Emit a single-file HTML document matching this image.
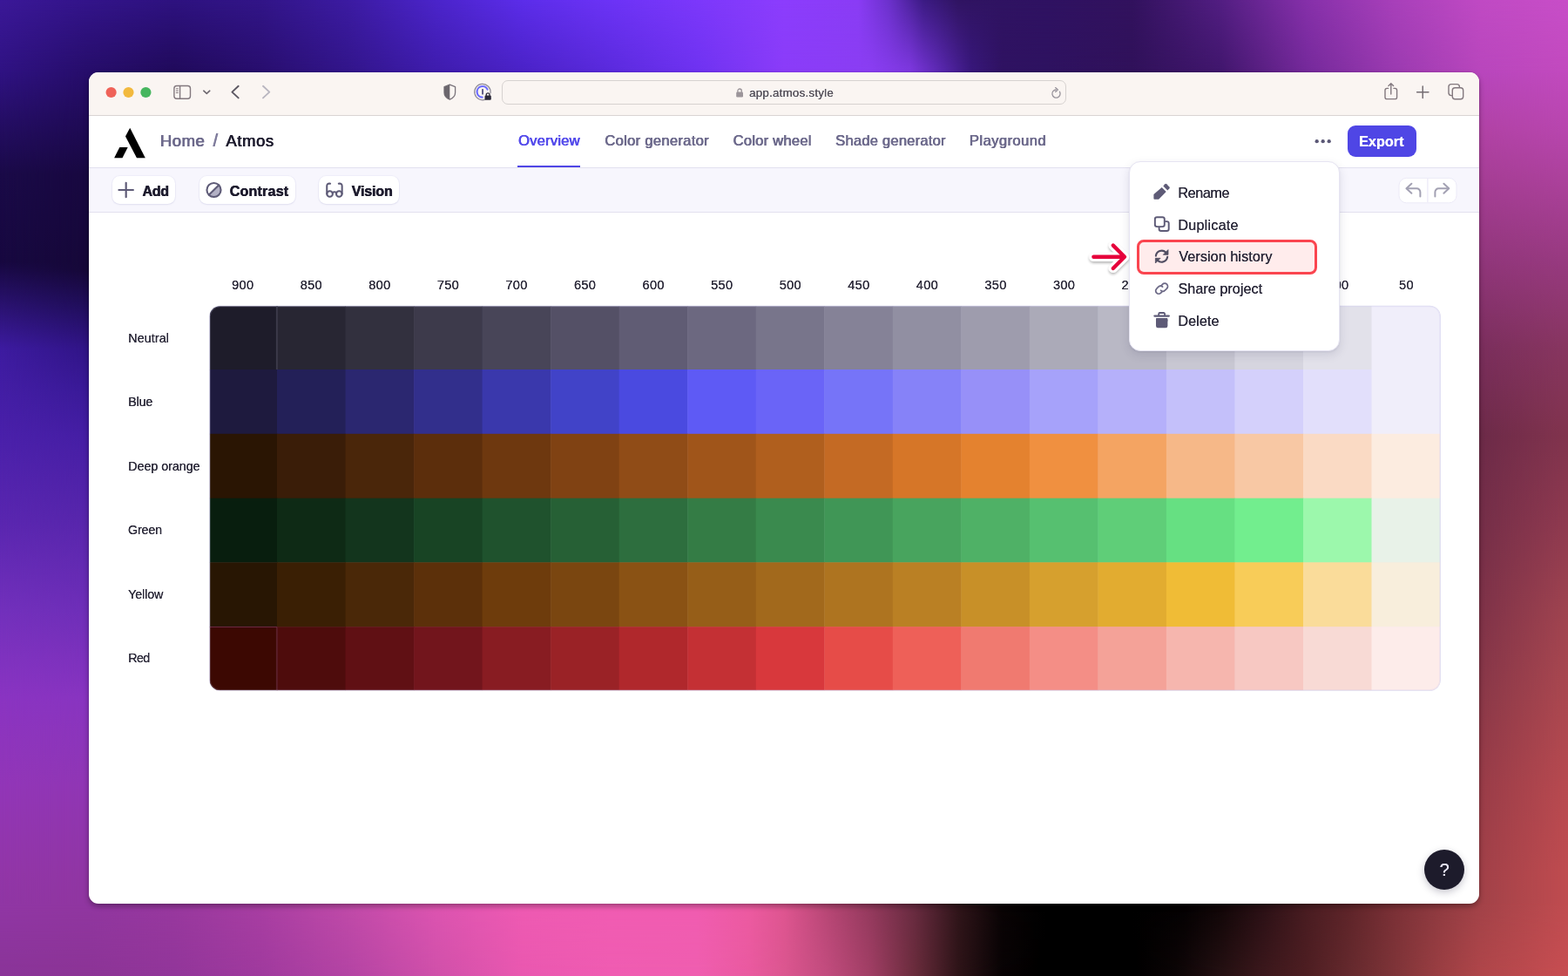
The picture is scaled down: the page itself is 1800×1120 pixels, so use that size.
<!DOCTYPE html>
<html lang="en">
<head>
<meta charset="utf-8">
<title>Atmos - Overview</title>
<style>
*{box-sizing:border-box;margin:0;padding:0}
html,body{width:1800px;height:1120px;overflow:hidden;background:#2a1040}
body{position:relative;font-family:"Liberation Sans", Arial, sans-serif}
.wall{position:absolute;left:0;top:0;display:block}
.win{position:absolute;left:102px;top:83px;width:1596px;height:954px;will-change:transform}
.clip{position:absolute;left:0;top:0;width:1596px;height:954px;border-radius:11px;overflow:hidden;background:#fff}
.winshadow{position:absolute;left:102px;top:83px;width:1596px;height:954px;border-radius:11px;box-shadow:0 3px 6px rgba(0,0,0,.33),0 0 1px rgba(0,0,0,.35)}
.pg{position:absolute;left:-102.3px;top:-83px;width:1800px;height:1120px}
.t,.pg>svg,.pg>div{position:absolute}
.pg>svg{display:block;overflow:visible}
.t{white-space:nowrap;line-height:0;height:0;display:block}
.t.c{transform:translateX(-50%)}
.titlebar{left:0;top:83px;width:1800px;height:50px;background:#faf5f2;border-bottom:1px solid #d9d4d3}
.url{left:576.5px;top:92px;width:648px;height:28px;border:1px solid #d6d2d0;border-radius:7px;background:#faf5f2}
.header{left:0;top:133px;width:1800px;height:60px;background:#fff;border-bottom:1px solid #e2e0ef}
.toolbar{left:0;top:193px;width:1800px;height:51px;background:#f7f6fd;border-bottom:1px solid #e2e0ef}
.btn{background:#fff;border-radius:8.5px;box-shadow:0 0 0 1px rgba(120,110,200,.05),0 1px 2px rgba(60,50,120,.09);height:32.2px;top:202px}
.export{left:1546.9px;top:144.2px;width:79px;height:35.8px;border-radius:9px;background:#4f46e5}
.tabline{left:594.7px;top:190px;width:72px;height:2px;background:#4f46e5}
.menu{left:1296.3px;top:184.8px;width:242.2px;height:218px;border-radius:13px;background:#fff;border:1px solid #e6e4f2;box-shadow:0 4px 11px rgba(40,36,80,.13),0 1px 2px rgba(40,36,80,.07)}
.hl{left:1305.3px;top:275px;width:206.5px;height:39.8px;border-radius:8px;border:3px solid #fa454f;background:#ffecec}
.help{left:1635.5px;top:975px;width:46px;height:46px;border-radius:50%;background:#1d1b2b;box-shadow:0 3px 8px rgba(30,28,60,.25)}
</style>
</head>
<body>
<svg class="wall" width="1800" height="1120" viewBox="0 0 1800 1120">
<defs>
<linearGradient id="gto" gradientUnits="userSpaceOnUse" x1="0" x2="1800" y1="0" y2="0"><stop offset="0.0000" stop-color="#3b1898"/><stop offset="0.0556" stop-color="#33148a"/><stop offset="0.1111" stop-color="#2e1280"/><stop offset="0.1667" stop-color="#321588"/><stop offset="0.2222" stop-color="#3c1ba2"/><stop offset="0.2778" stop-color="#4b24ca"/><stop offset="0.3333" stop-color="#5c2dea"/><stop offset="0.3889" stop-color="#6c33f6"/><stop offset="0.4444" stop-color="#7c38fb"/><stop offset="0.5000" stop-color="#8c3dfd"/><stop offset="0.5472" stop-color="#8a3cf5"/><stop offset="0.5667" stop-color="#6c31cc"/><stop offset="0.5889" stop-color="#3c1b84"/><stop offset="0.6111" stop-color="#301462"/><stop offset="0.6667" stop-color="#2f1262"/><stop offset="0.7222" stop-color="#32125e"/><stop offset="0.7778" stop-color="#521e82"/><stop offset="0.8333" stop-color="#8630aa"/><stop offset="0.8889" stop-color="#a840ba"/><stop offset="0.9444" stop-color="#c04ac4"/><stop offset="1.0000" stop-color="#c84ec8"/></linearGradient>
<linearGradient id="gti" gradientUnits="userSpaceOnUse" x1="0" x2="1800" y1="0" y2="0"><stop offset="0.0000" stop-color="#2f1282"/><stop offset="0.0556" stop-color="#260d6a"/><stop offset="0.1111" stop-color="#200a5a"/><stop offset="0.1667" stop-color="#280e6e"/><stop offset="0.2222" stop-color="#32158a"/><stop offset="0.2778" stop-color="#3e1cac"/><stop offset="0.3333" stop-color="#4a22c6"/><stop offset="0.3889" stop-color="#5a2adc"/><stop offset="0.4444" stop-color="#6e32f0"/><stop offset="0.5000" stop-color="#8a3cf8"/><stop offset="0.5556" stop-color="#8a3ef2"/><stop offset="0.5806" stop-color="#7e38e0"/><stop offset="0.6000" stop-color="#5a28b0"/><stop offset="0.6194" stop-color="#38177c"/><stop offset="0.6389" stop-color="#2f1262"/><stop offset="0.6667" stop-color="#2e1260"/><stop offset="0.7222" stop-color="#30115a"/><stop offset="0.7778" stop-color="#40166c"/><stop offset="0.8333" stop-color="#74299a"/><stop offset="0.8889" stop-color="#9a3ab0"/><stop offset="0.9444" stop-color="#b846bc"/><stop offset="1.0000" stop-color="#c24abe"/></linearGradient>
<linearGradient id="gbo" gradientUnits="userSpaceOnUse" x1="0" x2="1800" y1="0" y2="0"><stop offset="0.0000" stop-color="#8a3498"/><stop offset="0.0556" stop-color="#8c3496"/><stop offset="0.1111" stop-color="#92369a"/><stop offset="0.1667" stop-color="#a03a9e"/><stop offset="0.2222" stop-color="#b444a4"/><stop offset="0.2778" stop-color="#d050aa"/><stop offset="0.3333" stop-color="#ea58b0"/><stop offset="0.3889" stop-color="#f05cb2"/><stop offset="0.4444" stop-color="#f05eb0"/><stop offset="0.4778" stop-color="#ea5aa0"/><stop offset="0.5000" stop-color="#dc5690"/><stop offset="0.5278" stop-color="#c24c7e"/><stop offset="0.5556" stop-color="#a03e64"/><stop offset="0.5833" stop-color="#6a2c3c"/><stop offset="0.6111" stop-color="#2e1418"/><stop offset="0.6389" stop-color="#080304"/><stop offset="0.6667" stop-color="#000000"/><stop offset="0.7222" stop-color="#000000"/><stop offset="0.7500" stop-color="#0c0506"/><stop offset="0.7778" stop-color="#241012"/><stop offset="0.8056" stop-color="#3c181c"/><stop offset="0.8333" stop-color="#4e1e22"/><stop offset="0.8611" stop-color="#662a2e"/><stop offset="0.8889" stop-color="#7e3438"/><stop offset="0.9167" stop-color="#9a3e42"/><stop offset="0.9444" stop-color="#b0464a"/><stop offset="1.0000" stop-color="#c84e52"/></linearGradient>
<linearGradient id="gbi" gradientUnits="userSpaceOnUse" x1="0" x2="1800" y1="0" y2="0"><stop offset="0.0000" stop-color="#9036a4"/><stop offset="0.0556" stop-color="#9036a0"/><stop offset="0.1111" stop-color="#98389e"/><stop offset="0.1667" stop-color="#a83ea2"/><stop offset="0.2222" stop-color="#c04aa8"/><stop offset="0.2778" stop-color="#dc54b0"/><stop offset="0.3333" stop-color="#ee5ab2"/><stop offset="0.3889" stop-color="#f05cb2"/><stop offset="0.4444" stop-color="#f05cb0"/><stop offset="0.4778" stop-color="#ec5aa0"/><stop offset="0.5000" stop-color="#de5590"/><stop offset="0.5278" stop-color="#b64674"/><stop offset="0.5556" stop-color="#92395c"/><stop offset="0.5833" stop-color="#682b40"/><stop offset="0.6111" stop-color="#30151a"/><stop offset="0.6389" stop-color="#0a0405"/><stop offset="0.6667" stop-color="#000000"/><stop offset="0.7222" stop-color="#000000"/><stop offset="0.7556" stop-color="#040102"/><stop offset="0.7778" stop-color="#100607"/><stop offset="0.8056" stop-color="#2a1015"/><stop offset="0.8333" stop-color="#481c21"/><stop offset="0.8611" stop-color="#5e2429"/><stop offset="0.8889" stop-color="#7a3036"/><stop offset="0.9167" stop-color="#8e3a40"/><stop offset="0.9444" stop-color="#a24248"/><stop offset="1.0000" stop-color="#c04c50"/></linearGradient>
<linearGradient id="glo" gradientUnits="userSpaceOnUse" x1="0" x2="0" y1="83" y2="1037"><stop offset="0.0000" stop-color="#2f1282"/><stop offset="0.0702" stop-color="#230d60"/><stop offset="0.1226" stop-color="#1a0a48"/><stop offset="0.2275" stop-color="#170840"/><stop offset="0.2799" stop-color="#2a1270"/><stop offset="0.3323" stop-color="#3d1ba0"/><stop offset="0.4371" stop-color="#4a20aa"/><stop offset="0.5419" stop-color="#5a26b0"/><stop offset="0.6468" stop-color="#7230bc"/><stop offset="0.7516" stop-color="#8a34c2"/><stop offset="0.8564" stop-color="#9236b8"/><stop offset="0.9612" stop-color="#9236a8"/><stop offset="1.0000" stop-color="#9036a4"/></linearGradient>
<linearGradient id="gli" gradientUnits="userSpaceOnUse" x1="0" x2="0" y1="83" y2="1037"><stop offset="0.0000" stop-color="#260d6a"/><stop offset="0.0702" stop-color="#1e0a52"/><stop offset="0.1226" stop-color="#180840"/><stop offset="0.2379" stop-color="#160838"/><stop offset="0.2799" stop-color="#200e5a"/><stop offset="0.3323" stop-color="#301486"/><stop offset="0.3847" stop-color="#3a1a98"/><stop offset="0.4371" stop-color="#451ea4"/><stop offset="0.5419" stop-color="#5826ac"/><stop offset="0.6468" stop-color="#6e2eb8"/><stop offset="0.7516" stop-color="#8834c0"/><stop offset="0.8564" stop-color="#9036b4"/><stop offset="0.9612" stop-color="#9036a4"/><stop offset="1.0000" stop-color="#9036a0"/></linearGradient>
<linearGradient id="gro" gradientUnits="userSpaceOnUse" x1="0" x2="0" y1="83" y2="1037"><stop offset="0.0000" stop-color="#c24abe"/><stop offset="0.0702" stop-color="#b846ae"/><stop offset="0.1226" stop-color="#ae429e"/><stop offset="0.2275" stop-color="#983a80"/><stop offset="0.3323" stop-color="#883660"/><stop offset="0.4371" stop-color="#82344e"/><stop offset="0.5419" stop-color="#903a50"/><stop offset="0.6468" stop-color="#a04450"/><stop offset="0.7516" stop-color="#ac4850"/><stop offset="0.8564" stop-color="#b84a50"/><stop offset="0.9612" stop-color="#c04c50"/><stop offset="1.0000" stop-color="#c04c50"/></linearGradient>
<linearGradient id="gri" gradientUnits="userSpaceOnUse" x1="0" x2="0" y1="83" y2="1037"><stop offset="0.0000" stop-color="#b746bc"/><stop offset="0.0702" stop-color="#b042a4"/><stop offset="0.1226" stop-color="#a63e96"/><stop offset="0.2275" stop-color="#90367a"/><stop offset="0.3323" stop-color="#7a2e5c"/><stop offset="0.4371" stop-color="#6c2a48"/><stop offset="0.5419" stop-color="#742e48"/><stop offset="0.6468" stop-color="#7e3248"/><stop offset="0.7516" stop-color="#8a3848"/><stop offset="0.8564" stop-color="#983c48"/><stop offset="0.9612" stop-color="#a04048"/><stop offset="1.0000" stop-color="#a14248"/></linearGradient>
<linearGradient id="fd" gradientUnits="userSpaceOnUse" x1="0" x2="0" y1="0" y2="83"><stop offset="0" stop-color="#fff" stop-opacity="0"/><stop offset="1" stop-color="#fff" stop-opacity="1"/></linearGradient>
<linearGradient id="fu" gradientUnits="userSpaceOnUse" x1="0" x2="0" y1="1120" y2="1037"><stop offset="0" stop-color="#fff" stop-opacity="0"/><stop offset="1" stop-color="#fff" stop-opacity="1"/></linearGradient>
<linearGradient id="fr" gradientUnits="userSpaceOnUse" x1="0" x2="102" y1="0" y2="0"><stop offset="0" stop-color="#fff" stop-opacity="0"/><stop offset="1" stop-color="#fff" stop-opacity="1"/></linearGradient>
<linearGradient id="fl" gradientUnits="userSpaceOnUse" x1="1800" x2="1698" y1="0" y2="0"><stop offset="0" stop-color="#fff" stop-opacity="0"/><stop offset="1" stop-color="#fff" stop-opacity="1"/></linearGradient>
<mask id="mt" maskUnits="userSpaceOnUse" x="0" y="0" width="1800" height="97"><rect x="0" y="0" width="1800" height="97" fill="url(#fd)"/></mask>
<mask id="mb" maskUnits="userSpaceOnUse" x="0" y="1023" width="1800" height="97"><rect x="0" y="1023" width="1800" height="97" fill="url(#fu)"/></mask>
<mask id="ml" maskUnits="userSpaceOnUse" x="0" y="83" width="116" height="954"><rect x="0" y="83" width="116" height="954" fill="url(#fr)"/></mask>
<mask id="mr" maskUnits="userSpaceOnUse" x="1684" y="83" width="116" height="954"><rect x="1684" y="83" width="116" height="954" fill="url(#fl)"/></mask>
</defs>
<rect width="1800" height="1120" fill="#2a1040"/>
<rect x="0" y="0" width="1800" height="97" fill="url(#gto)"/>
<rect x="0" y="0" width="1800" height="97" fill="url(#gti)" mask="url(#mt)"/>
<rect x="0" y="1023" width="1800" height="97" fill="url(#gbo)"/>
<rect x="0" y="1023" width="1800" height="97" fill="url(#gbi)" mask="url(#mb)"/>
<rect x="0" y="83" width="116" height="954" fill="url(#glo)"/>
<rect x="0" y="83" width="116" height="954" fill="url(#gli)" mask="url(#ml)"/>
<rect x="1684" y="83" width="116" height="954" fill="url(#gro)"/>
<rect x="1684" y="83" width="116" height="954" fill="url(#gri)" mask="url(#mr)"/>
</svg>
<div class="winshadow"></div>
<div class="win"><div class="clip"><div class="pg">

<div class="titlebar"></div>
<svg style="left:110px;top:90px" width="220" height="32" viewBox="110 90 220 32" >
<circle cx="127.6" cy="106" r="6.1" fill="#ef6259"/>
<circle cx="147.5" cy="106" r="6.1" fill="#f2b93e"/>
<circle cx="167.4" cy="106" r="6.1" fill="#46b65f"/>
<g fill="none" stroke="#82787e" stroke-width="1.4" stroke-linecap="round" stroke-linejoin="round">
<rect x="199.9" y="98.5" width="18.6" height="14.8" rx="3"/>
<path d="M206.6 98.7V113.1"/>
<path d="M202.3 101.8H204.4M202.3 104.1H204.4M202.3 106.4H204.4" stroke-width="1"/>
</g>
<path d="M233.8 104.2L237.3 107.4L240.8 104.2" fill="none" stroke="#6e6870" stroke-width="1.6" stroke-linecap="round" stroke-linejoin="round"/>
<path d="M273.7 98.8L266.4 105.6L273.7 112.4" fill="none" stroke="#5c5762" stroke-width="1.9" stroke-linecap="round" stroke-linejoin="round"/>
<path d="M302 98.8L309.3 105.6L302 112.4" fill="none" stroke="#b9b6c0" stroke-width="1.9" stroke-linecap="round" stroke-linejoin="round"/>
</svg><svg style="left:500px;top:90px" width="80" height="32" viewBox="500 90 80 32" >
<path d="M516.3 97.2L522.6 99.7V106.2C522.6 110 520 112.6 516.3 114.2C512.6 112.6 510 110 510 106.2V99.7Z" fill="none" stroke="#7a747b" stroke-width="1.3" stroke-linejoin="round"/>
<path d="M516.3 97.2L510 99.7V106.2C510 110 512.6 112.6 516.3 114.2Z" fill="#6b666d"/>
<path d="M557.5 114.1A9.2 9.2 0 1 1 563.1 106.6" fill="none" stroke="#8d8994" stroke-width="1.2" stroke-linecap="round"/>
<path d="M553.6 111.6A6.3 6.3 0 1 1 559.6 102.6" fill="none" stroke="#6c6cff" stroke-width="2.1" stroke-linecap="round"/>
<rect x="553.1" y="102" width="1.9" height="6.6" rx="0.5" fill="#5d5a85"/>
<rect x="556.5" y="109.6" width="7.3" height="5.1" rx="1.2" fill="#2b2939"/>
<path d="M558.2 110V108.9A1.95 1.95 0 0 1 562.1 108.9V110" fill="none" stroke="#2b2939" stroke-width="1.3"/>
</svg><svg style="left:1580px;top:90px" width="110" height="32" viewBox="1580 90 110 32" >
<g fill="none" stroke="#82787e" stroke-width="1.4" stroke-linecap="round" stroke-linejoin="round">
<path d="M1593.6 101.4H1592.2A2.2 2.2 0 0 0 1590 103.6V111.4A2.2 2.2 0 0 0 1592.2 113.6H1601.4A2.2 2.2 0 0 0 1603.6 111.4V103.6A2.2 2.2 0 0 0 1601.4 101.4H1600"/>
<path d="M1596.8 108V96M1594 98.6L1596.8 95.8L1599.6 98.6"/>
<path d="M1626.6 105.7H1639.9M1633.25 99V112.4" stroke="#746d73" stroke-width="1.5"/>
<rect x="1663" y="96.6" width="12.4" height="13" rx="3"/>
<rect x="1667.3" y="100.8" width="12.4" height="13" rx="3" fill="#faf5f2"/>
</g>
</svg>
<div class="url"></div>
<svg style="left:840px;top:96px" width="20" height="20" viewBox="840 96 20 20" >
<rect x="845.2" y="105.6" width="7.8" height="5.8" rx="1.2" fill="#9c959a"/>
<path d="M846.9 106V104.2A2.2 2.2 0 0 1 851.3 104.2V106" fill="none" stroke="#9c959a" stroke-width="1.3"/>
</svg><svg style="left:1200px;top:96px" width="24" height="24" viewBox="1200 96 24 24" >
<path d="M1216.4 105.2A4.6 4.6 0 1 1 1212.4 103" fill="none" stroke="#97939b" stroke-width="1.3" stroke-linecap="round"/>
<path d="M1211.6 100.6L1214.4 103L1211.6 105.4" fill="none" stroke="#97939b" stroke-width="1.3" stroke-linecap="round" stroke-linejoin="round"/>
</svg>
<span class="t" style="left:860.35px;top:107.39px;font-size:13.3px;color:#55515b;letter-spacing:0.25px;text-shadow:0.15px 0 0 #55515b;">app.atmos.style</span>

<div class="header"></div>
<svg style="left:128px;top:144px" width="42" height="40" viewBox="128 144 42 40" >
<path d="M149.2 146.8L166.8 181.2H157L144 156.4Z" fill="#000"/>
<path d="M137.3 169H146.7L140.5 181.2H131.1Z" fill="#000"/>
</svg>
<span class="t" style="left:184.19px;top:161.59px;font-size:18.5px;color:#6d6a8c;letter-spacing:0.52px;text-shadow:0.4px 0 0 #6d6a8c,-0.4px 0 0 #6d6a8c;">Home</span>
<span class="t" style="left:244.97px;top:161.24px;font-size:19.5px;color:#7f7c9c;text-shadow:0.4px 0 0 #7f7c9c,-0.4px 0 0 #7f7c9c;">/</span>
<span class="t" style="left:259.76px;top:161.59px;font-size:18.5px;color:#1f1d2f;letter-spacing:0.58px;text-shadow:0.4px 0 0 #1f1d2f,-0.4px 0 0 #1f1d2f;">Atmos</span>

<span class="t" style="left:595.41px;top:162.25px;font-size:16.6px;color:#554ceb;letter-spacing:0.19px;text-shadow:0.35px 0 0 #554ceb,-0.35px 0 0 #554ceb;">Overview</span>
<span class="t" style="left:694.63px;top:162.25px;font-size:16.6px;color:#6d6a8c;letter-spacing:0.29px;text-shadow:0.35px 0 0 #6d6a8c,-0.35px 0 0 #6d6a8c;">Color generator</span>
<span class="t" style="left:841.93px;top:162.25px;font-size:16.6px;color:#6d6a8c;letter-spacing:0.22px;text-shadow:0.35px 0 0 #6d6a8c,-0.35px 0 0 #6d6a8c;">Color wheel</span>
<span class="t" style="left:959.52px;top:162.25px;font-size:16.6px;color:#6d6a8c;letter-spacing:0.19px;text-shadow:0.35px 0 0 #6d6a8c,-0.35px 0 0 #6d6a8c;">Shade generator</span>
<span class="t" style="left:1113.27px;top:162.25px;font-size:16.6px;color:#6d6a8c;letter-spacing:0.41px;text-shadow:0.35px 0 0 #6d6a8c,-0.35px 0 0 #6d6a8c;">Playground</span>
<div class="tabline"></div>
<svg style="left:1505px;top:155px" width="28" height="14" viewBox="1505 155 28 14" >
<circle cx="1511.7" cy="162.2" r="2.15" fill="#5b5876"/>
<circle cx="1518.7" cy="162.2" r="2.15" fill="#5b5876"/>
<circle cx="1525.7" cy="162.2" r="2.15" fill="#5b5876"/>
</svg>
<div class="export"></div>
<span class="t" style="left:1560.37px;top:162.39px;font-size:16.2px;font-weight:700;color:#fff;letter-spacing:0.01px;text-shadow:0.15px 0 0 #fff;">Export</span>

<div class="toolbar"></div>
<div class="btn" style="left:129.4px;width:72.2px"></div>
<div class="btn" style="left:229.2px;width:109.8px"></div>
<div class="btn" style="left:366.2px;width:92.3px"></div>
<span class="t" style="left:163.83px;top:219.42px;font-size:16.1px;font-weight:700;color:#1f1d2f;letter-spacing:-0.32px;text-shadow:0.25px 0 0 #1f1d2f,-0.25px 0 0 #1f1d2f;">Add</span>
<span class="t" style="left:263.95px;top:219.42px;font-size:16.1px;font-weight:700;color:#1f1d2f;letter-spacing:0.19px;text-shadow:0.25px 0 0 #1f1d2f,-0.25px 0 0 #1f1d2f;">Contrast</span>
<span class="t" style="left:403.99px;top:219.42px;font-size:16.1px;font-weight:700;color:#1f1d2f;letter-spacing:-0.17px;text-shadow:0.25px 0 0 #1f1d2f,-0.25px 0 0 #1f1d2f;">Vision</span>
<svg style="left:130px;top:200px" width="330" height="36" viewBox="130 200 330 36" >
<path d="M136.45 218H152.9M144.67 209.8V226.2" fill="none" stroke="#5e5b77" stroke-width="2.2" stroke-linecap="round"/>
<circle cx="245.5" cy="218" r="8.05" fill="#fff"/>
<path d="M251.2 212.3A8.05 8.05 0 0 1 239.8 223.7Z" fill="#b3b1c5"/>
<path d="M239.9 223.6L251.1 212.4" fill="none" stroke="#5e5b77" stroke-width="2.1" stroke-linecap="round"/>
<circle cx="245.5" cy="218" r="8.05" fill="none" stroke="#5e5b77" stroke-width="2.1"/>
<g fill="none" stroke="#5e5b77" stroke-width="2.05" stroke-linecap="round" stroke-linejoin="round">
<circle cx="378.6" cy="222.5" r="3.3"/>
<circle cx="389.3" cy="222.5" r="3.3"/>
<path d="M381.6 221.2C382.9 220.2 385 220.2 386.3 221.2"/>
<path d="M375.25 222.4V213.4A2.9 2.9 0 0 1 378.15 210.5L379.1 210.8"/>
<path d="M392.65 222.4V213.4A2.9 2.9 0 0 0 389.75 210.5L388.8 210.8"/>
</g>
</svg><svg style="left:1600px;top:200px" width="80" height="36" viewBox="1600 200 80 36" >
<rect x="1606" y="204.4" width="66" height="28.4" rx="8.5" fill="#fff" stroke="#eceaf7" stroke-width="1"/>
<path d="M1638.9 204.9V232.3" stroke="#eceaf7" stroke-width="1.3"/>
<g fill="none" stroke="#a3a1b3" stroke-width="2" stroke-linecap="round" stroke-linejoin="round">
<path d="M1620.4 210.8L1614.5 216.3L1620.4 221.8"/>
<path d="M1614.8 216.3H1626.3A4.1 4.1 0 0 1 1630.4 220.4V225.6"/>
<path d="M1657.4 210.8L1663.3 216.3L1657.4 221.8"/>
<path d="M1663 216.3H1651.5A4.1 4.1 0 0 0 1647.4 220.4V225.6"/>
</g>
</svg>

<span class="t c" style="left:279.0px;top:327.44px;font-size:14.6px;color:#2a2838;letter-spacing:0.3px;text-shadow:0.1px 0 0 #2a2838;">900</span>
<span class="t c" style="left:357.57px;top:327.44px;font-size:14.6px;color:#2a2838;letter-spacing:0.3px;text-shadow:0.1px 0 0 #2a2838;">850</span>
<span class="t c" style="left:436.14px;top:327.44px;font-size:14.6px;color:#2a2838;letter-spacing:0.3px;text-shadow:0.1px 0 0 #2a2838;">800</span>
<span class="t c" style="left:514.71px;top:327.44px;font-size:14.6px;color:#2a2838;letter-spacing:0.3px;text-shadow:0.1px 0 0 #2a2838;">750</span>
<span class="t c" style="left:593.28px;top:327.44px;font-size:14.6px;color:#2a2838;letter-spacing:0.3px;text-shadow:0.1px 0 0 #2a2838;">700</span>
<span class="t c" style="left:671.85px;top:327.44px;font-size:14.6px;color:#2a2838;letter-spacing:0.3px;text-shadow:0.1px 0 0 #2a2838;">650</span>
<span class="t c" style="left:750.42px;top:327.44px;font-size:14.6px;color:#2a2838;letter-spacing:0.3px;text-shadow:0.1px 0 0 #2a2838;">600</span>
<span class="t c" style="left:828.99px;top:327.44px;font-size:14.6px;color:#2a2838;letter-spacing:0.3px;text-shadow:0.1px 0 0 #2a2838;">550</span>
<span class="t c" style="left:907.56px;top:327.44px;font-size:14.6px;color:#2a2838;letter-spacing:0.3px;text-shadow:0.1px 0 0 #2a2838;">500</span>
<span class="t c" style="left:986.13px;top:327.44px;font-size:14.6px;color:#2a2838;letter-spacing:0.3px;text-shadow:0.1px 0 0 #2a2838;">450</span>
<span class="t c" style="left:1064.7px;top:327.44px;font-size:14.6px;color:#2a2838;letter-spacing:0.3px;text-shadow:0.1px 0 0 #2a2838;">400</span>
<span class="t c" style="left:1143.27px;top:327.44px;font-size:14.6px;color:#2a2838;letter-spacing:0.3px;text-shadow:0.1px 0 0 #2a2838;">350</span>
<span class="t c" style="left:1221.84px;top:327.44px;font-size:14.6px;color:#2a2838;letter-spacing:0.3px;text-shadow:0.1px 0 0 #2a2838;">300</span>
<span class="t c" style="left:1300.41px;top:327.44px;font-size:14.6px;color:#2a2838;letter-spacing:0.3px;text-shadow:0.1px 0 0 #2a2838;">250</span>
<span class="t c" style="left:1378.98px;top:327.44px;font-size:14.6px;color:#2a2838;letter-spacing:0.3px;text-shadow:0.1px 0 0 #2a2838;">200</span>
<span class="t c" style="left:1457.55px;top:327.44px;font-size:14.6px;color:#2a2838;letter-spacing:0.3px;text-shadow:0.1px 0 0 #2a2838;">150</span>
<span class="t c" style="left:1536.12px;top:327.44px;font-size:14.6px;color:#2a2838;letter-spacing:0.3px;text-shadow:0.1px 0 0 #2a2838;">100</span>
<span class="t c" style="left:1614.69px;top:327.44px;font-size:14.6px;color:#2a2838;letter-spacing:0.3px;text-shadow:0.1px 0 0 #2a2838;">50</span>
<span class="t" style="left:147.56px;top:388.05px;font-size:14.3px;color:#2a2838;letter-spacing:0.09px;text-shadow:0.1px 0 0 #2a2838;">Neutral</span>
<span class="t" style="left:147.56px;top:461.05px;font-size:14.3px;color:#2a2838;letter-spacing:-0.19px;text-shadow:0.1px 0 0 #2a2838;">Blue</span>
<span class="t" style="left:147.56px;top:535.05px;font-size:14.3px;color:#2a2838;letter-spacing:-0.04px;text-shadow:0.1px 0 0 #2a2838;">Deep orange</span>
<span class="t" style="left:147.21px;top:608.05px;font-size:14.3px;color:#2a2838;letter-spacing:-0.15px;text-shadow:0.1px 0 0 #2a2838;">Green</span>
<span class="t" style="left:147.38px;top:682.05px;font-size:14.3px;color:#2a2838;letter-spacing:-0.12px;text-shadow:0.1px 0 0 #2a2838;">Yellow</span>
<span class="t" style="left:147.56px;top:755.05px;font-size:14.3px;color:#2a2838;letter-spacing:-0.64px;text-shadow:0.1px 0 0 #2a2838;">Red</span>
<svg class="grid" style="left:236px;top:346px" width="1424" height="452" viewBox="236 346 1424 452">
<defs><clipPath id="gc"><rect x="240.7" y="351.2" width="1412.60" height="441.10" rx="12" ry="12"/></clipPath></defs>
<rect x="241.00" y="351.50" width="1412.00" height="440.50" rx="11.7" ry="11.7" fill="none" stroke="#dcdaf0" stroke-width="1.6"/>
<g clip-path="url(#gc)">
<rect x="240.7" y="351.2" width="1412.60" height="441.10" fill="#dcdaf0"/>
<g transform="translate(0 0)"><rect x="240.70" y="351.20" width="77.80" height="73.30" fill="#1e1c2a"/><rect x="318.00" y="351.20" width="79.03" height="73.30" fill="#282633"/><rect x="396.53" y="351.20" width="79.03" height="73.30" fill="#32303e"/><rect x="475.06" y="351.20" width="79.03" height="73.30" fill="#3d3a4b"/><rect x="553.59" y="351.20" width="79.03" height="73.30" fill="#484558"/><rect x="632.12" y="351.20" width="79.04" height="73.30" fill="#545066"/><rect x="710.66" y="351.20" width="79.03" height="73.30" fill="#605c74"/><rect x="789.19" y="351.20" width="79.03" height="73.30" fill="#6c6880"/><rect x="867.72" y="351.20" width="79.03" height="73.30" fill="#78758b"/><rect x="946.25" y="351.20" width="79.03" height="73.30" fill="#858297"/><rect x="1024.78" y="351.20" width="79.03" height="73.30" fill="#918fa2"/><rect x="1103.31" y="351.20" width="79.03" height="73.30" fill="#9e9cad"/><rect x="1181.84" y="351.20" width="79.04" height="73.30" fill="#abaab8"/><rect x="1260.38" y="351.20" width="79.03" height="73.30" fill="#b9b8c5"/><rect x="1338.91" y="351.20" width="79.03" height="73.30" fill="#c8c7d2"/><rect x="1417.44" y="351.20" width="79.03" height="73.30" fill="#d6d5df"/><rect x="1495.97" y="351.20" width="79.03" height="73.30" fill="#e2e1ea"/><rect x="1574.50" y="351.20" width="78.80" height="73.30" fill="#f0eefa"/><rect x="240.70" y="424.00" width="77.80" height="74.30" fill="#1e1a3e"/><rect x="318.00" y="424.00" width="79.03" height="74.30" fill="#232058"/><rect x="396.53" y="424.00" width="79.03" height="74.30" fill="#2b2770"/><rect x="475.06" y="424.00" width="79.03" height="74.30" fill="#322f8c"/><rect x="553.59" y="424.00" width="79.03" height="74.30" fill="#3a38ac"/><rect x="632.12" y="424.00" width="79.04" height="74.30" fill="#4143c8"/><rect x="710.66" y="424.00" width="79.03" height="74.30" fill="#4a4ae0"/><rect x="789.19" y="424.00" width="79.03" height="74.30" fill="#5e5af5"/><rect x="867.72" y="424.00" width="79.03" height="74.30" fill="#6a64f7"/><rect x="946.25" y="424.00" width="79.03" height="74.30" fill="#7674f8"/><rect x="1024.78" y="424.00" width="79.03" height="74.30" fill="#8682f8"/><rect x="1103.31" y="424.00" width="79.03" height="74.30" fill="#9790f8"/><rect x="1181.84" y="424.00" width="79.04" height="74.30" fill="#a6a2fa"/><rect x="1260.38" y="424.00" width="79.03" height="74.30" fill="#b5b0fa"/><rect x="1338.91" y="424.00" width="79.03" height="74.30" fill="#c4c0fa"/><rect x="1417.44" y="424.00" width="79.03" height="74.30" fill="#d4d0fb"/><rect x="1495.97" y="424.00" width="79.03" height="74.30" fill="#e2dffb"/><rect x="1574.50" y="424.00" width="78.80" height="74.30" fill="#f0eefa"/><rect x="240.70" y="497.80" width="77.80" height="74.40" fill="#2a1503"/><rect x="318.00" y="497.80" width="79.03" height="74.40" fill="#3a1d08"/><rect x="396.53" y="497.80" width="79.03" height="74.40" fill="#4a260a"/><rect x="475.06" y="497.80" width="79.03" height="74.40" fill="#5c2e0c"/><rect x="553.59" y="497.80" width="79.03" height="74.40" fill="#6e380f"/><rect x="632.12" y="497.80" width="79.04" height="74.40" fill="#804213"/><rect x="710.66" y="497.80" width="79.03" height="74.40" fill="#904c17"/><rect x="789.19" y="497.80" width="79.03" height="74.40" fill="#a0551a"/><rect x="867.72" y="497.80" width="79.03" height="74.40" fill="#b05f1e"/><rect x="946.25" y="497.80" width="79.03" height="74.40" fill="#c46a24"/><rect x="1024.78" y="497.80" width="79.03" height="74.40" fill="#d67628"/><rect x="1103.31" y="497.80" width="79.03" height="74.40" fill="#e4822f"/><rect x="1181.84" y="497.80" width="79.04" height="74.40" fill="#f09040"/><rect x="1260.38" y="497.80" width="79.03" height="74.40" fill="#f4a462"/><rect x="1338.91" y="497.80" width="79.03" height="74.40" fill="#f6b888"/><rect x="1417.44" y="497.80" width="79.03" height="74.40" fill="#f8c8a4"/><rect x="1495.97" y="497.80" width="79.03" height="74.40" fill="#fadac4"/><rect x="1574.50" y="497.80" width="78.80" height="74.40" fill="#fcece0"/><rect x="240.70" y="571.70" width="77.80" height="74.10" fill="#081e0e"/><rect x="318.00" y="571.70" width="79.03" height="74.10" fill="#0e2a15"/><rect x="396.53" y="571.70" width="79.03" height="74.10" fill="#13351d"/><rect x="475.06" y="571.70" width="79.03" height="74.10" fill="#184424"/><rect x="553.59" y="571.70" width="79.03" height="74.10" fill="#1f522d"/><rect x="632.12" y="571.70" width="79.04" height="74.10" fill="#266035"/><rect x="710.66" y="571.70" width="79.03" height="74.10" fill="#2d6e3e"/><rect x="789.19" y="571.70" width="79.03" height="74.10" fill="#347c45"/><rect x="867.72" y="571.70" width="79.03" height="74.10" fill="#3a8a4e"/><rect x="946.25" y="571.70" width="79.03" height="74.10" fill="#409656"/><rect x="1024.78" y="571.70" width="79.03" height="74.10" fill="#48a45e"/><rect x="1103.31" y="571.70" width="79.03" height="74.10" fill="#4fb166"/><rect x="1181.84" y="571.70" width="79.04" height="74.10" fill="#56c070"/><rect x="1260.38" y="571.70" width="79.03" height="74.10" fill="#5fce78"/><rect x="1338.91" y="571.70" width="79.03" height="74.10" fill="#66e082"/><rect x="1417.44" y="571.70" width="79.03" height="74.10" fill="#72ee8e"/><rect x="1495.97" y="571.70" width="79.03" height="74.10" fill="#9cf8ac"/><rect x="1574.50" y="571.70" width="78.80" height="74.10" fill="#e8f2e8"/><rect x="240.70" y="645.30" width="77.80" height="74.40" fill="#281603"/><rect x="318.00" y="645.30" width="79.03" height="74.40" fill="#3a1f04"/><rect x="396.53" y="645.30" width="79.03" height="74.40" fill="#4a2808"/><rect x="475.06" y="645.30" width="79.03" height="74.40" fill="#5c300a"/><rect x="553.59" y="645.30" width="79.03" height="74.40" fill="#6e3c0c"/><rect x="632.12" y="645.30" width="79.04" height="74.40" fill="#7a4610"/><rect x="710.66" y="645.30" width="79.03" height="74.40" fill="#8a5214"/><rect x="789.19" y="645.30" width="79.03" height="74.40" fill="#965e18"/><rect x="867.72" y="645.30" width="79.03" height="74.40" fill="#a2691c"/><rect x="946.25" y="645.30" width="79.03" height="74.40" fill="#ae7420"/><rect x="1024.78" y="645.30" width="79.03" height="74.40" fill="#ba8024"/><rect x="1103.31" y="645.30" width="79.03" height="74.40" fill="#c89028"/><rect x="1181.84" y="645.30" width="79.04" height="74.40" fill="#d6a02e"/><rect x="1260.38" y="645.30" width="79.03" height="74.40" fill="#e2ac30"/><rect x="1338.91" y="645.30" width="79.03" height="74.40" fill="#f0bc36"/><rect x="1417.44" y="645.30" width="79.03" height="74.40" fill="#f8cc58"/><rect x="1495.97" y="645.30" width="79.03" height="74.40" fill="#fadc9a"/><rect x="1574.50" y="645.30" width="78.80" height="74.40" fill="#f8eedc"/><rect x="240.70" y="719.20" width="77.80" height="73.10" fill="#3c0802"/><rect x="318.00" y="719.20" width="79.03" height="73.10" fill="#4e0c0c"/><rect x="396.53" y="719.20" width="79.03" height="73.10" fill="#601014"/><rect x="475.06" y="719.20" width="79.03" height="73.10" fill="#72151c"/><rect x="553.59" y="719.20" width="79.03" height="73.10" fill="#881c22"/><rect x="632.12" y="719.20" width="79.04" height="73.10" fill="#9a2226"/><rect x="710.66" y="719.20" width="79.03" height="73.10" fill="#b0282c"/><rect x="789.19" y="719.20" width="79.03" height="73.10" fill="#c43034"/><rect x="867.72" y="719.20" width="79.03" height="73.10" fill="#d8383c"/><rect x="946.25" y="719.20" width="79.03" height="73.10" fill="#e64c48"/><rect x="1024.78" y="719.20" width="79.03" height="73.10" fill="#ee6058"/><rect x="1103.31" y="719.20" width="79.03" height="73.10" fill="#f07a70"/><rect x="1181.84" y="719.20" width="79.04" height="73.10" fill="#f48e86"/><rect x="1260.38" y="719.20" width="79.03" height="73.10" fill="#f4a298"/><rect x="1338.91" y="719.20" width="79.03" height="73.10" fill="#f6b6ae"/><rect x="1417.44" y="719.20" width="79.03" height="73.10" fill="#f7c8c2"/><rect x="1495.97" y="719.20" width="79.03" height="73.10" fill="#f8dad5"/><rect x="1574.50" y="719.20" width="78.80" height="73.10" fill="#fdecea"/></g>
<rect x="316.90" y="351.20" width="1.9" height="72.80" fill="#3c3a4a"/>
<rect x="316.90" y="719.20" width="1.9" height="73.10" fill="#5a1f2a"/>
<rect x="240.70" y="719.00" width="77.30" height="1" fill="#6b2844"/>
<rect x="241.20" y="351.70" width="1411.60" height="440.10" rx="11.5" ry="11.5" fill="none" stroke="#c9c6ee" stroke-opacity="0.28" stroke-width="1"/>
</g>
</svg>

<div class="menu"></div>
<div class="hl"></div>
<span class="t" style="left:1352.6px;top:221.39px;font-size:16.2px;color:#2a2839;letter-spacing:-0.42px;text-shadow:0.15px 0 0 #2a2839;">Rename</span>
<span class="t" style="left:1352.6px;top:258.39px;font-size:16.2px;color:#2a2839;letter-spacing:0.2px;text-shadow:0.15px 0 0 #2a2839;">Duplicate</span>
<span class="t" style="left:1353.55px;top:294.39px;font-size:16.2px;color:#2a2839;letter-spacing:0.07px;text-shadow:0.15px 0 0 #2a2839;">Version history</span>
<span class="t" style="left:1352.69px;top:331.39px;font-size:16.2px;color:#2a2839;letter-spacing:0.03px;text-shadow:0.15px 0 0 #2a2839;">Share project</span>
<span class="t" style="left:1352.6px;top:368.39px;font-size:16.2px;color:#2a2839;letter-spacing:0.06px;text-shadow:0.15px 0 0 #2a2839;">Delete</span>
<svg style="left:1318px;top:205px" width="32" height="180" viewBox="1318 205 32 180" >
<path d="M1333.7 215.1L1338.7 220.1L1330.4 228.4A1.2 1.2 0 0 1 1329.6 228.7H1325.3A0.9 0.9 0 0 1 1324.4 227.8V223.5A1.2 1.2 0 0 1 1324.7 222.7Z" fill="#5e5b77"/>
<path d="M1335.3 213.4L1337.4 211.3A1.3 1.3 0 0 1 1339.2 211.3L1342.4 214.5A1.3 1.3 0 0 1 1342.4 216.3L1340.3 218.4Z" fill="#5e5b77"/>
<g fill="none" stroke="#5e5b77" stroke-width="1.95" stroke-linecap="round" stroke-linejoin="round">
<rect x="1325.85" y="249.25" width="10.95" height="10.85" rx="2.3"/>
<path d="M1338 254.1H1339.5A2.2 2.2 0 0 1 1341.7 256.3V262.7A2.2 2.2 0 0 1 1339.5 264.9H1332.8A2.2 2.2 0 0 1 1330.6 262.7V261.2"/>
</g>
<g fill="none" stroke="#514e62" stroke-width="2.1" stroke-linecap="round" stroke-linejoin="round">
<path d="M1326.9 293.7A6.8 6.8 0 0 1 1338.3 289.5L1339.7 290.9"/>
<path d="M1340.2 294.7A6.8 6.8 0 0 1 1328.8 298.8L1327.6 297.4"/>
</g>
<path d="M1341 286.6V292.3H1335.3Z" fill="#514e62" stroke="#514e62" stroke-width="0.8" stroke-linejoin="round"/>
<path d="M1326.4 302V296.3H1332.1Z" fill="#514e62" stroke="#514e62" stroke-width="0.8" stroke-linejoin="round"/>
<g fill="none" stroke="#6d6a87" stroke-width="1.75" stroke-linecap="round" stroke-linejoin="round">
<path d="M1333.5 327.3L1334.6 326.2A3.45 3.45 0 0 1 1339.5 331.1L1337.4 333.2A3.45 3.45 0 0 1 1332.6 333.3"/>
<path d="M1333.7 335.1L1332.6 336.2A3.45 3.45 0 0 1 1327.7 331.3L1329.8 329.2A3.45 3.45 0 0 1 1334.6 329.1"/>
</g>
<rect x="1327" y="365.1" width="13.4" height="11.2" rx="2.3" fill="#5e5b77"/>
<rect x="1327" y="365.1" width="13.4" height="4" rx="0.8" fill="#5e5b77"/>
<path d="M1325.4 362.55H1341.8" fill="none" stroke="#5e5b77" stroke-width="2.3" stroke-linecap="round"/>
<path d="M1330.2 362V360.2A1.2 1.2 0 0 1 1331.4 359H1335.9A1.2 1.2 0 0 1 1337.1 360.2V362" fill="none" stroke="#5e5b77" stroke-width="1.8" stroke-linejoin="round"/>
</svg>
<svg style="left:1240px;top:268px" width="64" height="56" viewBox="1240 268 64 56" >
<defs><filter id="ash" x="-30%" y="-30%" width="160%" height="180%"><feGaussianBlur in="SourceAlpha" stdDeviation="1.6"/><feOffset dy="2.2"/><feComponentTransfer><feFuncA type="linear" slope="0.28"/></feComponentTransfer><feMerge><feMergeNode/><feMergeNode in="SourceGraphic"/></feMerge></filter></defs>
<g filter="url(#ash)" fill="none" stroke-linecap="round" stroke-linejoin="round">
<path d="M1255.4 294.8H1290.6M1277.8 281.6L1291 294.8L1277.8 308" stroke="#fff" stroke-width="10.2"/>
<path d="M1255.4 294.8H1290.6M1277.8 281.6L1291 294.8L1277.8 308" stroke="#e6053a" stroke-width="4.4"/>
</g>
</svg>

<div class="help"></div>
<span class="t c" style="left:1658.4px;top:998.07px;font-size:20px;color:#e4e2f2;text-shadow:0.1px 0 0 #e4e2f2;">?</span>

</div></div></div>
</body>
</html>
